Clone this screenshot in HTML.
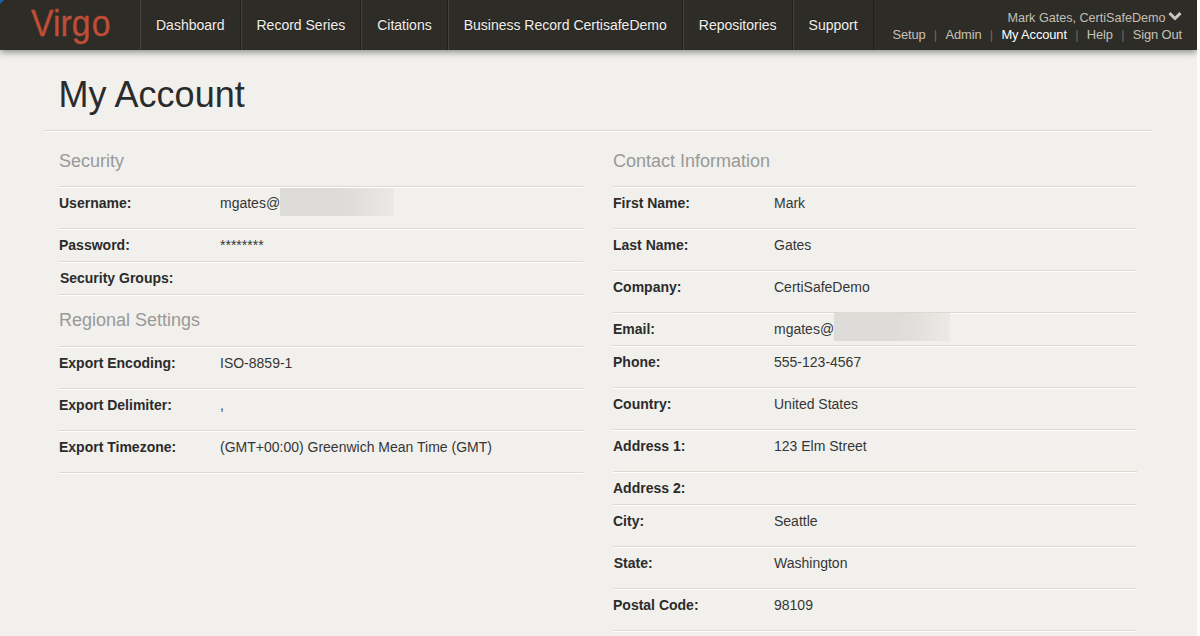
<!DOCTYPE html>
<html lang="en">
<head>
<meta charset="utf-8">
<title>My Account</title>
<style>
*{box-sizing:border-box;margin:0;padding:0}
html,body{width:1200px;height:636px;overflow:hidden;background:#fcfcfc}
body{font-family:"Liberation Sans",Arial,sans-serif;font-size:14px;color:#333;position:relative}
#page{position:absolute;left:0;top:0;width:1197px;height:636px;background:#f1f0ec;overflow:hidden}
#nav{position:absolute;left:0;top:0;width:1197px;height:50px;background:#2e2c27;box-shadow:0 2px 7px rgba(0,0,0,.45)}
#corner{position:absolute;left:0;top:0;width:4px;height:4px;background:linear-gradient(135deg,#1b66a8 0,#1b66a8 38%,#2e2c27 58%)}
#logo{position:absolute;left:31px;top:0;height:50px;line-height:47px;font-size:36.7px;color:#c04d37;transform:scaleX(.92);transform-origin:0 0;white-space:nowrap;-webkit-text-stroke:.3px #c04d37}
#logo i{font-style:normal;margin-left:1.45px}
#menu{position:absolute;left:140px;top:0;height:50px;list-style:none;display:flex}
#menu li{height:50px;line-height:50px;padding:0 15px;border-left:1px solid #45433d;border-right:1px solid #1f1e1a;color:#f1f0ec;font-size:14px;white-space:nowrap;text-shadow:0 -1px 0 rgba(0,0,0,.4)}
#user{position:absolute;right:15px;top:9px;text-align:right;color:#c2bfb4;font-size:12.6px;line-height:18px;white-space:nowrap}
#user .links{position:relative;top:-.6px;font-size:12.9px;letter-spacing:-.12px;color:#c6c3b8}
#user .chev{display:inline-block;vertical-align:top;margin:3px 0 0 2.4px}
#user .links b{color:#fff;font-weight:normal}
#user .sep{color:#6d6a60;margin:0 8.3px;letter-spacing:0}
h1{position:absolute;left:58.6px;top:74.5px;font-size:36px;font-weight:normal;line-height:40px;color:#2b2b2b;white-space:nowrap}
#hr{position:absolute;left:44px;top:130px;width:1108px;height:2px;border-top:1px solid #dcd9ce;border-bottom:1px solid #fff}
.col{position:absolute;top:150px;width:524px}
#c1{left:59px}#c2{left:613px}
h4{font-size:18px;font-weight:normal;color:#999;line-height:22px;height:36px}
.r{border-top:1px solid #dcd9ce;box-shadow:inset 0 1px 0 #fff;height:42px;padding-top:7px;line-height:18px;display:flex}
.r.s{height:33px}
.r .l{width:161px;font-weight:bold;color:#2b2b2b}
.r .v{color:#363636}
.last{border-top:1px solid #dcd9ce;box-shadow:inset 0 1px 0 #fff;height:2px}
.blur{display:inline-block;vertical-align:top;width:114px;height:28px;margin-top:-6px;background:linear-gradient(90deg,#dedcd9 0,#dddcd8 55%,#e3e2de 78%,#ebeae6 100%)}
.blur.e{width:116px;margin-top:-7px}
</style>
</head>
<body>
<div id="page">
<h1>My Account</h1>
<div id="hr"></div>
<div class="col" id="c1">
<h4>Security</h4>
<div class="r"><span class="l">Username:</span><span class="v">mgates@<span class="blur"></span></span></div>
<div class="r s"><span class="l">Password:</span><span class="v">********</span></div>
<div class="r s"><span class="l" style="padding-left:.9px">Security Groups:</span><span class="v"></span></div>
<div class="last" style="height:15px"></div>
<h4 style="height:37px">Regional Settings</h4>
<div class="r"><span class="l">Export Encoding:</span><span class="v">ISO-8859-1</span></div>
<div class="r"><span class="l">Export Delimiter:</span><span class="v">,</span></div>
<div class="r"><span class="l">Export Timezone:</span><span class="v">(GMT+00:00) Greenwich Mean Time (GMT)</span></div>
<div class="last"></div>
</div>
<div class="col" id="c2">
<h4>Contact Information</h4>
<div class="r"><span class="l">First Name:</span><span class="v">Mark</span></div>
<div class="r"><span class="l">Last Name:</span><span class="v">Gates</span></div>
<div class="r"><span class="l">Company:</span><span class="v">CertiSafeDemo</span></div>
<div class="r s"><span class="l">Email:</span><span class="v">mgates@<span class="blur e"></span></span></div>
<div class="r"><span class="l">Phone:</span><span class="v">555-123-4567</span></div>
<div class="r"><span class="l">Country:</span><span class="v">United States</span></div>
<div class="r"><span class="l">Address 1:</span><span class="v">123 Elm Street</span></div>
<div class="r s"><span class="l">Address 2:</span><span class="v"></span></div>
<div class="r"><span class="l">City:</span><span class="v">Seattle</span></div>
<div class="r"><span class="l" style="padding-left:.7px">State:</span><span class="v">Washington</span></div>
<div class="r"><span class="l">Postal Code:</span><span class="v">98109</span></div>
<div class="last"></div>
</div>
<div id="nav">
<div id="corner"></div>
<div id="logo">Virg<i>o</i></div>
<ul id="menu"><li>Dashboard</li><li>Record Series</li><li>Citations</li><li>Business Record CertisafeDemo</li><li>Repositories</li><li>Support</li></ul>
<div id="user"><div class="name">Mark Gates, CertiSafeDemo<svg class="chev" width="14" height="9" viewBox="0 0 14 9"><polyline points="1.5,1.1 7,6.5 12.5,1.1" fill="none" stroke="#c9c7bd" stroke-width="3"/></svg></div><div class="links">Setup<span class="sep">|</span>Admin<span class="sep">|</span><b>My Account</b><span class="sep">|</span>Help<span class="sep">|</span>Sign Out</div></div>
</div>
</div>
</body>
</html>
